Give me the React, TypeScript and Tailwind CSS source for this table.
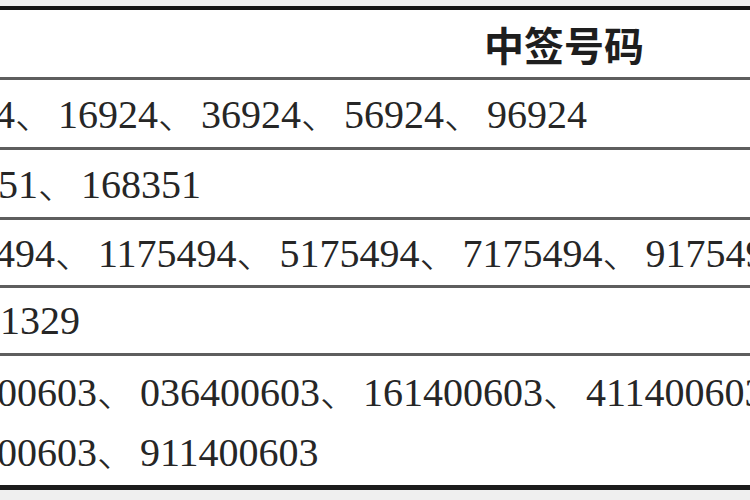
import React from 'react';

const serif = "font-['Liberation_Serif','Noto_Sans_CJK_SC',serif]";

type Line = { nums: string[]; shift: string };

// one line of winning numbers separated by ideographic commas
const NumberLine = ({ nums, shift }: Line) => (
  <div className={`whitespace-nowrap ${shift}`}>
    {nums.map((n, i) => (
      <React.Fragment key={i}>
        {i > 0 && (
          <span className="inline-block w-[43px] font-['Noto_Sans_CJK_SC',sans-serif] text-[38px] font-light">、</span>
        )}
        <span>{n}</span>
      </React.Fragment>
    ))}
  </div>
);

const rows: { h: string; lines: Line[] }[] = [
  { h: 'h-[70px]', lines: [{ nums: ['4', '16924', '36924', '56924', '96924'], shift: '-ml-[5px]' }] },
  { h: 'h-[70px]', lines: [{ nums: ['51', '168351'], shift: '-ml-[2px]' }] },
  {
    h: 'h-[68px]',
    lines: [{ nums: ['494', '1175494', '5175494', '7175494', '9175494'], shift: '-ml-[5px]' }],
  },
  { h: 'h-[68px]', lines: [{ nums: ['1329'], shift: 'ml-0' }] },
  {
    h: 'h-[129px]',
    lines: [
      { nums: ['00603', '036400603', '161400603', '411400603'], shift: '-ml-[3px]' },
      { nums: ['00603', '911400603'], shift: '-ml-[3px]' },
    ],
  },
];

export default function App() {
  return (
    <div className="w-[750px] h-[500px] overflow-hidden bg-[#ededed] flex flex-col">
      <div className="h-[6px] bg-[#ececec]" />
      <div className="flex-1 bg-white border-t-[4px] border-b-[5px] border-t-[#111] border-b-[#1c1c1c] flex flex-col">
        {/* header */}
        <div className="h-[70px] shrink-0 flex items-center border-b-[3px] border-[#5e5e5e] overflow-hidden">
          <span className="ml-[484px] text-[40px] leading-[40px] font-semibold text-[#1e1e1e] font-['Noto_Sans_CJK_SC',sans-serif]">
            中签号码
          </span>
        </div>
        {rows.map((r, i) => (
          <div
            key={i}
            className={`${r.h} shrink-0 flex flex-col justify-center overflow-hidden text-[40px] text-[#262626] ${serif} ${
              r.lines.length > 1 ? 'leading-[57px]' : 'leading-[40px]'
            } ${i < rows.length - 1 ? 'border-b-[3px] border-[#5e5e5e]' : ''}`}
          >
            {r.lines.map((l, j) => (
              <NumberLine key={j} {...l} />
            ))}
          </div>
        ))}
      </div>
      <div className="h-[10px] bg-[#efefef]" />
    </div>
  );
}
